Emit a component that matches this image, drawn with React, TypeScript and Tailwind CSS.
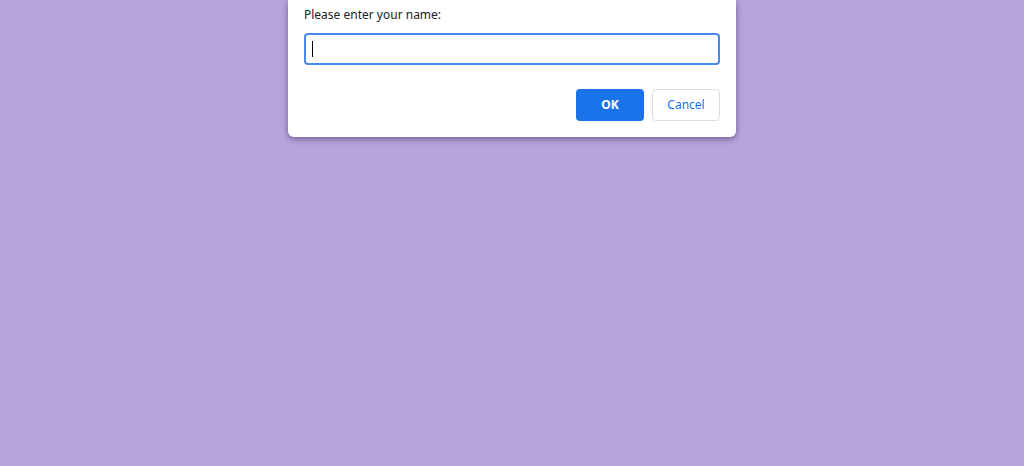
export default function App() {
  return (
    <div className="min-h-[466px] w-full bg-[#b7a4db] font-['Noto_Sans',sans-serif]">
      <div className="mx-auto w-[448px] rounded-b-[6px] bg-white px-4 pt-[7px] pb-4 shadow-[0_2px_6px_rgba(40,20,70,0.5)]">
        <p className="text-[12px] leading-4 text-[#202124]">Please enter your name:</p>
        <div className="mt-[10px] flex h-8 items-center rounded-[4px] border-2 border-[#4a88ec] px-[6px]">
          <div className="h-[16px] w-px bg-black" />
        </div>
        <div className="mt-6 flex justify-end gap-2">
          <button className="h-8 w-[68px] rounded-[4px] bg-[#1a73e8] text-[12px] font-bold text-white">
            OK
          </button>
          <button className="h-8 w-[68px] rounded-[4px] border border-[#dadce0] bg-white text-[12px] text-[#1a73e8]">
            Cancel
          </button>
        </div>
      </div>
    </div>
  )
}
